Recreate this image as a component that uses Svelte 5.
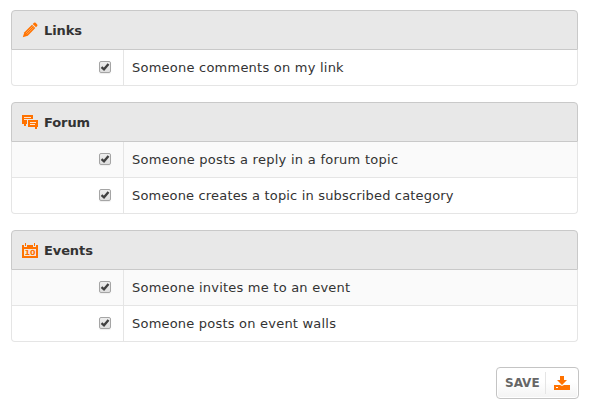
<script>
  const groups = [
    { title: 'Links', icon: 'pencil', rows: [{ text: 'Someone comments on my link', track: 0.23 }] },
    {
      title: 'Forum',
      icon: 'forum',
      rows: [
        { text: 'Someone posts a reply in a forum topic', track: 0.27 },
        { text: 'Someone creates a topic in subscribed category', track: 0.17 }
      ]
    },
    {
      title: 'Events',
      icon: 'calendar',
      rows: [
        { text: 'Someone invites me to an event', track: 0.22 },
        { text: 'Someone posts on event walls', track: 0.21 }
      ]
    }
  ];
  let checked = $state(groups.map((g) => g.rows.map(() => true)));
</script>

<main>
  {#each groups as group, g}
    <section>
      <header>
        <svg class="icon" width="16" height="16" viewBox="0 0 16 16" aria-hidden="true">
          {#if group.icon === 'pencil'}
            <path d="M.8 15.2l1.6-5 7.6-7.4 3.3 3.3-7.5 7.7z" />
            <path d="M10.7 2l1.3-1.2q.8-.6 1.6 0l1.6 1.6q.6.8 0 1.6l-1.2 1.3z" />
            <path class="groove" d="M3.8 11.2l6.9-6.9M4.9 12.3l6.9-6.9" />
          {:else if group.icon === 'forum'}
            <path d="M0 1h11v4H5v5H4v2H2v-2H0z" />
            <path d="M6 6h10v7h-1v2h-2v-2H6z" />
            <path class="line" d="M2 3.5h7M2 5.5h3M8 8.5h6M8 10.5h5" />
          {:else}
            <path shape-rendering="crispEdges" d="M0 3h2v2h3V3h6v2h3V3h2v13H0z" />
            <path shape-rendering="crispEdges" d="M3 1h1v3H3zM12 1h1v3h-1z" />
            <path class="paper" d="M2 7h12v7H2z" />
            <text x="2.5" y="13" textLength="11" lengthAdjust="spacingAndGlyphs">10</text>
          {/if}
        </svg>
        <h2>{group.title}</h2>
      </header>
      {#each group.rows as row, r}
        <label class="row" class:shaded={group.rows.length > 1 && r === 0}>
          <span class="check">
            <input type="checkbox" bind:checked={checked[g][r]} />
            <span class="box">
              {#if checked[g][r]}
                <svg width="10" height="10" viewBox="0 0 10 10" aria-hidden="true">
                  <path d="M1.5 5.1L4 7.3 8.5 1.9" />
                </svg>
              {/if}
            </span>
          </span>
          <span class="text" style="letter-spacing: {row.track}px">{row.text}</span>
        </label>
      {/each}
    </section>
  {/each}
  <footer>
    <button type="button">
      <span class="save">SAVE</span>
      <span class="download">
        <svg width="16" height="14" viewBox="0 0 16 14" aria-hidden="true">
          <path d="M6 0h4v4h3L8 9 3 4h3zM0 9h6l2 1 2-1h6v5H0z" />
          <path class="light" d="M2 11h2v1H2z" />
        </svg>
      </span>
    </button>
  </footer>
</main>

<style>
  :global(body) {
    background: #fff;
  }
  main {
    box-sizing: border-box;
    width: 590px;
    height: 405px;
    padding: 10px 12px 0 11px;
    display: flex;
    flex-direction: column;
    gap: 16px;
    font: 13px 'DejaVu Sans', sans-serif;
    color: #333;
  }
  header {
    box-sizing: border-box;
    height: 40px;
    display: flex;
    align-items: center;
    gap: 6px;
    padding: 0 10px;
    background: #e8e8e8;
    border: 1px solid #c9c9c9;
    border-radius: 4px 4px 0 0;
  }
  h2 {
    margin: 0;
    padding-top: 2px;
    font-size: 13px;
    line-height: 16px;
    font-weight: bold;
    letter-spacing: -0.1px;
  }
  .icon {
    fill: #ff7200;
  }
  .groove {
    fill: none;
    stroke: #ffc28c;
    stroke-width: 0.6;
  }
  .line {
    fill: none;
    stroke: #ffe5cf;
  }
  .paper {
    fill: #f5e6d9;
  }
  .icon text {
    font: bold 7px 'DejaVu Sans', sans-serif;
    fill: #ff7200;
  }
  .row {
    box-sizing: border-box;
    height: 36px;
    display: flex;
    border: 1px solid #e5e5e5;
    border-top: 0;
    background: #fff;
  }
  .row.shaded {
    background: #fafafa;
  }
  .row:last-child {
    border-radius: 0 0 4px 4px;
  }
  .check {
    box-sizing: border-box;
    width: 112px;
    padding: 11px 12px 0 0;
    display: flex;
    justify-content: flex-end;
    align-items: flex-start;
    border-right: 1px solid #e5e5e5;
  }
  input {
    appearance: none;
    width: 0;
    height: 0;
    margin: 0;
  }
  .box {
    box-sizing: border-box;
    width: 12px;
    height: 12px;
    border: 1px solid #a5a5a5;
    border-radius: 2px;
    background: linear-gradient(#ededed, #dedede);
    box-shadow: 0 1px 1px #eee;
  }
  .box svg {
    display: block;
  }
  .box path {
    fill: none;
    stroke: #404040;
    stroke-width: 2.3;
  }
  .text {
    padding-left: 8px;
    line-height: 35px;
    white-space: nowrap;
  }
  footer {
    display: flex;
    justify-content: flex-end;
    padding-top: 9px;
    margin-right: -1px;
  }
  button {
    box-sizing: border-box;
    width: 83px;
    height: 32px;
    padding: 0;
    display: flex;
    align-items: center;
    border: 1px solid #c4c4c4;
    border-radius: 4px;
    background: linear-gradient(#fff 0%, #fff 45%, #f3f3f3 100%);
    box-shadow: inset 0 0 0 1px #fff;
  }
  .save {
    width: 48px;
    padding-left: 8px;
    box-sizing: border-box;
    text-align: left;
    font: bold 12px/16px 'DejaVu Sans', sans-serif;
    color: #666;
  }
  .download {
    box-sizing: border-box;
    height: 22px;
    padding: 4px 0 0 8px;
    border-left: 1px solid #e5e5e5;
  }
  .download svg {
    display: block;
    fill: #ff7200;
  }
  .download .light {
    fill: #fff;
  }
</style>
